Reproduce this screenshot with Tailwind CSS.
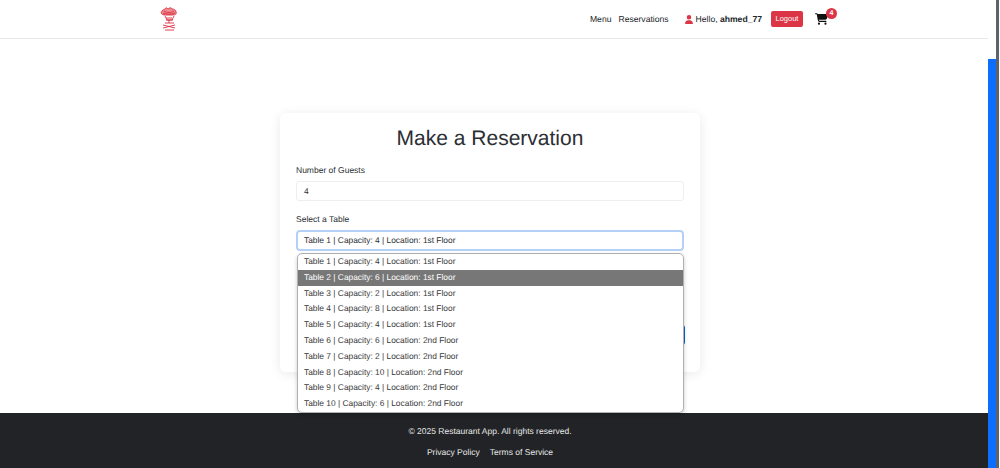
<!DOCTYPE html>
<html lang="en">
<head>
    <meta charset="UTF-8">
    <meta name="viewport" content="width=device-width, initial-scale=1.0">
    <title>Make a Reservation</title>
    <script src="https://cdn.jsdelivr.net/npm/@tailwindcss/browser@4"></script>
</head>
<body class="bg-white h-[468px] overflow-hidden flex font-['Liberation_Sans',Arial,sans-serif] text-[#2b2f33] [text-rendering:geometricPrecision]">

    <div class="w-[988px] h-[468px] flex flex-col shrink-0">
        <!-- navbar -->
        <nav class="h-[39px] shrink-0 border-b border-[#e9e7e9] pl-[160px] pr-[151px] flex items-center justify-between">
            <svg class="w-[18px] h-[26px] mt-[-3px]" viewBox="0 0 18 26" fill="none" stroke="#d9303e" stroke-width="0.9">
                <path d="M2 6c1-2 2-1 3-2 1-2 2-1 3 0 1-1 3-2 4 0 2 0 4 1 4 3 1 2-1 3-3 3H5C2 10 0 8 2 6z" fill="#ee8a90"/>
                <path d="M4 6c3 2 7 2 10 0M3 8c4 1.500 8 1.500 12 0M5 11l2 4h5l2-4M6 13h6M6 15h7M9 15v3M5 18h9M3 20l12 3M15 20L3 23M5 25h9"/>
            </svg>
            <div class="flex items-center text-[8.6px] leading-none text-[#212529]">
                <a class="mr-[7px]">Menu</a>
                <a class="mr-[16px]">Reservations</a>
                <svg class="w-[8px] h-[9px] mr-[3px]" viewBox="0 0 448 512" fill="#dc3545"><path d="M224 256a128 128 0 1 0 0-256 128 128 0 1 0 0 256zm-45.700 48C79.800 304 0 383.800 0 482.300 0 498.700 13.300 512 29.700 512h388.600c16.400 0 29.700-13.300 29.700-29.700C448 383.800 368.200 304 269.700 304z"/></svg>
                <span class="mr-[9px]">Hello, <b>ahmed_77</b></span>
                <button class="h-[16px] w-[32px] bg-[#dc3545] text-white text-[7.5px] rounded-[2px] mr-[12px]">Logout</button>
                <div class="relative mr-[9px]">
                    <svg class="w-[13px] h-[12px]" viewBox="0 0 576 512" fill="#111"><path d="M0 24C0 10.700 10.700 0 24 0h45.500c22 0 41.500 12.800 50.600 32h411c26.300 0 45.500 25 38.600 50.400l-41 152.300c-8.500 31.400-37 53.300-69.500 53.300H170.700l5.400 28.500c2.200 11.300 12.100 19.500 23.600 19.500H488c13.300 0 24 10.700 24 24s-10.700 24-24 24H199.700c-34.600 0-64.300-24.600-70.700-58.500L77.400 54.500c-.7-3.800-4-6.500-7.900-6.500H24C10.700 48 0 37.300 0 24zm128 440a48 48 0 1 1 96 0 48 48 0 1 1-96 0zm336-48a48 48 0 1 1 0 96 48 48 0 1 1 0-96z"/></svg>
                    <span class="absolute top-[-5px] left-[11px] w-[11px] h-[11px] rounded-full bg-[#dc3545] text-white text-[7px] font-bold flex items-center justify-center">4</span>
                </div>
            </div>
        </nav>

        <main class="flex-1 flex flex-col items-center pr-[8px]">
            <!-- reservation card -->
            <div class="relative w-[420px] h-[259px] mt-[74px] rounded-[6px] shadow-[0_2px_12px_rgba(0,0,0,0.09)] bg-white px-[16px] pt-[14px]">
                <h1 class="text-[21px] leading-[24px] text-center mb-[13px]">Make a Reservation</h1>
                <label class="block text-[8.5px] leading-[12px] mb-[5px]">Number of Guests</label>
                <div class="h-[20px] rounded-[3px] border border-[#eeeeee] px-[7px] text-[8.4px] flex items-center mb-[12px]">4</div>
                <label class="block text-[8.5px] leading-[12px] mb-[5px]">Select a Table</label>
                <div class="h-[21px] rounded-[4px] border-2 border-[#b5d0f7] px-[6px] text-[8.4px] flex items-center">Table 1 | Capacity: 4 | Location: 1st Floor</div>
                <div class="absolute left-[18px] w-[387px] top-[212px] h-[20px] rounded-[3px] bg-[#0b5ed7]"></div>

                <!-- open select list -->
                <ul class="absolute z-10 left-[17px] top-[140px] w-[387px] h-[160px] bg-white rounded-[5px] border border-[#b0b0b0] shadow-[0_2px_4px_rgba(0,0,0,0.2)] overflow-hidden text-[8.4px] leading-[15.8px] text-[#3a3a3a]">
                    <li class="pl-[6px]">Table 1 | Capacity: 4 | Location: 1st Floor</li>
                    <li class="pl-[6px] bg-[#777777] text-white">Table 2 | Capacity: 6 | Location: 1st Floor</li>
                    <li class="pl-[6px]">Table 3 | Capacity: 2 | Location: 1st Floor</li>
                    <li class="pl-[6px]">Table 4 | Capacity: 8 | Location: 1st Floor</li>
                    <li class="pl-[6px]">Table 5 | Capacity: 4 | Location: 1st Floor</li>
                    <li class="pl-[6px]">Table 6 | Capacity: 6 | Location: 2nd Floor</li>
                    <li class="pl-[6px]">Table 7 | Capacity: 2 | Location: 2nd Floor</li>
                    <li class="pl-[6px]">Table 8 | Capacity: 10 | Location: 2nd Floor</li>
                    <li class="pl-[6px]">Table 9 | Capacity: 4 | Location: 2nd Floor</li>
                    <li class="pl-[6px]">Table 10 | Capacity: 6 | Location: 2nd Floor</li>
                </ul>
            </div>
        </main>

        <footer class="h-[55px] shrink-0 bg-[#212326] text-[#e8e8e8] text-[8.5px] pr-[8px] flex flex-col items-center pt-[13px]">
            <p class="leading-[11px] mb-[10px]">© 2025 Restaurant App. All rights reserved.</p>
            <div class="flex gap-[10px] leading-[11px]">
                <a>Privacy Policy</a>
                <a>Terms of Service</a>
            </div>
        </footer>
    </div>

    <!-- page scrollbar -->
    <div class="w-[8px] h-[468px] flex flex-col shrink-0">
        <div class="h-[59px] bg-white"></div>
        <div class="flex-1 bg-[#0d6efd]"></div>
    </div>
    <div class="w-[3px] h-[468px] bg-[#5f6368] shrink-0"></div>
    <div class="flex-1 bg-white"></div>

</body>
</html>
